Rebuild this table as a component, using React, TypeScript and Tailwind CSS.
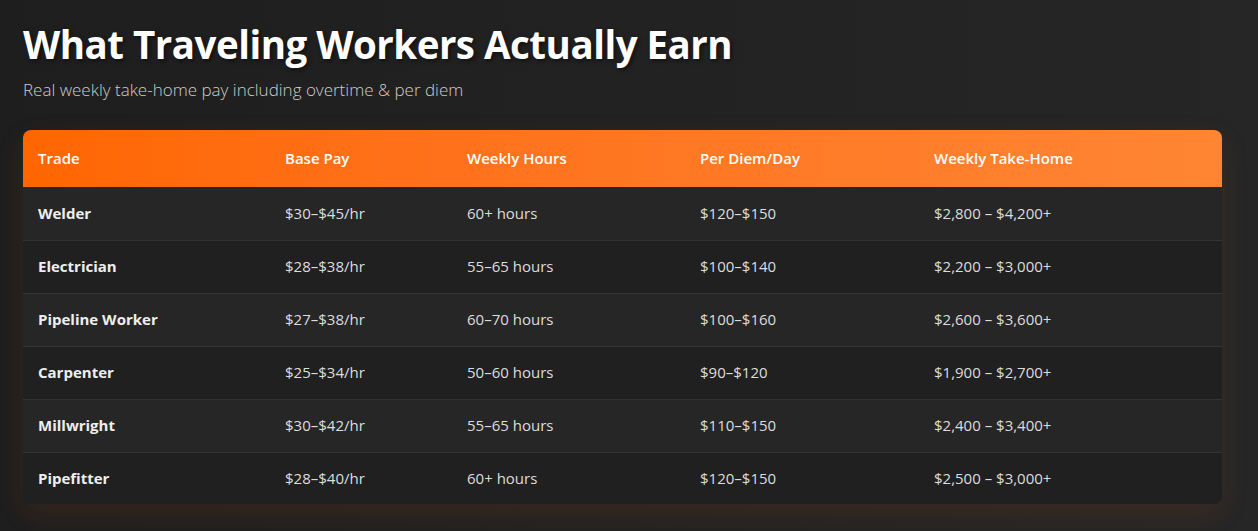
const rows = [
  ["Welder", "$30–$45/hr", "60+ hours", "$120–$150", "$2,800 – $4,200+"],
  ["Electrician", "$28–$38/hr", "55–65 hours", "$100–$140", "$2,200 – $3,000+"],
  ["Pipeline Worker", "$27–$38/hr", "60–70 hours", "$100–$160", "$2,600 – $3,600+"],
  ["Carpenter", "$25–$34/hr", "50–60 hours", "$90–$120", "$1,900 – $2,700+"],
  ["Millwright", "$30–$42/hr", "55–65 hours", "$110–$150", "$2,400 – $3,400+"],
  ["Pipefitter", "$28–$40/hr", "60+ hours", "$120–$150", "$2,500 – $3,000+"],
];

const headers = ["Trade", "Base Pay", "Weekly Hours", "Per Diem/Day", "Weekly Take-Home"];
const widths = ["w-[247px]", "w-[182px]", "w-[233px]", "w-[234px]", ""];

export default function App() {
  return (
    <div className="min-h-[531px] bg-gradient-to-r from-[#1e1e1e] to-[#262626] pl-[23px] pr-[36px] pt-[18px] pb-[28px] font-['Open_Sans','Noto_Sans',sans-serif]">
      <h1 className="text-[38.5px] font-bold leading-[52px] tracking-[-0.5px] text-white [text-shadow:2px_2px_4px_rgba(0,0,0,0.5)]">
        What Traveling Workers Actually Earn
      </h1>
      <p className="mt-[8px] text-[17px] font-light leading-[24px] text-[#cccccc]">
        Real weekly take-home pay including overtime &amp; per diem
      </p>
      <div className="mt-[28px] overflow-hidden rounded-[8px] shadow-[0_10px_30px_rgba(255,107,0,0.1)]">
        <table className="w-full border-collapse text-left text-[15px]">
          <thead>
            <tr className="h-[57px] bg-gradient-to-r from-[#ff6600] to-[#ff8533]">
              {headers.map((h, i) => (
                <th key={h} className={`${widths[i]} px-[15px] font-semibold text-white`}>
                  {h}
                </th>
              ))}
            </tr>
          </thead>
          <tbody>
            {rows.map((r, ri) => (
              <tr
                key={r[0]}
                className={`${ri < rows.length - 1 ? "h-[53px] border-b border-[#333333]" : "h-[52px]"} ${ri % 2 === 0 ? "bg-[#262626]" : "bg-[#202020]"}`}
              >
                {r.map((c, ci) => (
                  <td
                    key={ci}
                    className={`px-[15px] ${ci === 0 ? "font-bold text-[#eeeeee]" : "text-[#dddddd]"}`}
                  >
                    {c}
                  </td>
                ))}
              </tr>
            ))}
          </tbody>
        </table>
      </div>
    </div>
  );
}
